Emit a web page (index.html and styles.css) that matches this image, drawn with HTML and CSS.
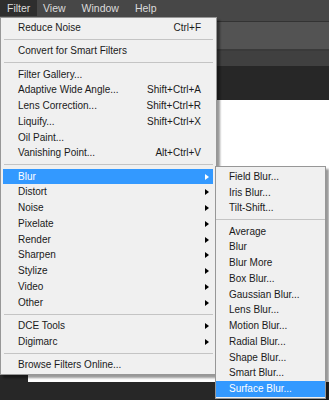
FILE: index.html
```html
<!DOCTYPE html>
<html lang="en">
<head>
  <meta charset="UTF-8" />
  <title>Filter menu</title>
  <link rel="stylesheet" href="styles.css">
</head>
<body>

<div class="menubar">
  <span class="menubar-item active">Filter</span>
  <span class="menubar-item">View</span>
  <span class="menubar-item">Window</span>
  <span class="menubar-item">Help</span>
</div>
<div class="optionsbar"></div>
<div class="tabsbar"></div>
<div class="workspace">
  <div class="toolpanel"></div>
  <div class="document"></div>
</div>

<div class="menu menu-main">
  <div class="item"><span>Reduce Noise</span><span class="key">Ctrl+F</span></div>
  <div class="sep"></div>
  <div class="item"><span>Convert for Smart Filters</span></div>
  <div class="sep"></div>
  <div class="item"><span>Filter Gallery...</span></div>
  <div class="item"><span>Adaptive Wide Angle...</span><span class="key">Shift+Ctrl+A</span></div>
  <div class="item"><span>Lens Correction...</span><span class="key">Shift+Ctrl+R</span></div>
  <div class="item"><span>Liquify...</span><span class="key">Shift+Ctrl+X</span></div>
  <div class="item"><span>Oil Paint...</span></div>
  <div class="item"><span>Vanishing Point...</span><span class="key">Alt+Ctrl+V</span></div>
  <div class="sep"></div>
  <div class="item sub selected"><span>Blur</span><i class="arrow"></i></div>
  <div class="item sub"><span>Distort</span><i class="arrow"></i></div>
  <div class="item sub"><span>Noise</span><i class="arrow"></i></div>
  <div class="item sub"><span>Pixelate</span><i class="arrow"></i></div>
  <div class="item sub"><span>Render</span><i class="arrow"></i></div>
  <div class="item sub"><span>Sharpen</span><i class="arrow"></i></div>
  <div class="item sub"><span>Stylize</span><i class="arrow"></i></div>
  <div class="item sub"><span>Video</span><i class="arrow"></i></div>
  <div class="item sub"><span>Other</span><i class="arrow"></i></div>
  <div class="sep"></div>
  <div class="item sub"><span>DCE Tools</span><i class="arrow"></i></div>
  <div class="item sub"><span>Digimarc</span><i class="arrow"></i></div>
  <div class="sep"></div>
  <div class="item"><span>Browse Filters Online...</span></div>
</div>

<div class="menu menu-sub">
  <div class="item"><span>Field Blur...</span></div>
  <div class="item"><span>Iris Blur...</span></div>
  <div class="item"><span>Tilt-Shift...</span></div>
  <div class="sep"></div>
  <div class="item"><span>Average</span></div>
  <div class="item"><span>Blur</span></div>
  <div class="item"><span>Blur More</span></div>
  <div class="item"><span>Box Blur...</span></div>
  <div class="item"><span>Gaussian Blur...</span></div>
  <div class="item"><span>Lens Blur...</span></div>
  <div class="item"><span>Motion Blur...</span></div>
  <div class="item"><span>Radial Blur...</span></div>
  <div class="item"><span>Shape Blur...</span></div>
  <div class="item"><span>Smart Blur...</span></div>
  <div class="item selected"><span>Surface Blur...</span></div>
</div>

</body>
</html>
```

FILE: styles.css
```css
body {
  margin: 0;
  background-color: #272727;
  font-family: 'Liberation Sans', Arial, sans-serif;
  font-size: 10px;
  color: #1a1a1a;
  height: 400px;
  overflow: hidden;
  position: relative;
}

/* app chrome behind the menu */
.menubar {
  height: 21px;
  background-color: #474747;
  border-bottom: 1px solid #333;
  display: flex;
  align-items: flex-start;
}

.menubar-item {
  color: #dcdcdc;
  height: 16px;
  line-height: 16px;
  font-size: 10.5px;
  padding: 0 10px 0 6px;
}

.menubar-item.active {
  background-color: #2e2e2e;
  box-sizing: border-box;
  width: 37px;
  padding: 0 0 0 7px;
}

.optionsbar {
  height: 27px;
  background-color: #535353;
  border-bottom: 2px solid #3a3a3a;
}

.tabsbar {
  height: 15px;
  background-color: #404040;
}

.workspace {
  display: flex;
  padding-top: 34px;
  height: 282px;
}

.toolpanel {
  width: 28px;
  flex-shrink: 0;
}

.document {
  flex: 1;
  background-color: #fff;
}

/* dropdown menus */
.menu {
  position: absolute;
  background-color: #f0f0f0;
  border: 1px solid #979797;
  box-shadow: 3px 3px 2px rgba(0, 0, 0, 0.4);
}

.menu-main {
  left: 0;
  top: 17px;
  width: 215px;
  padding: 2.1px 0 1px;
}

.menu-sub {
  left: 215px;
  top: 166px;
  width: 109px;
  padding: 1.8px 0 1.3px;
}

.item {
  height: 15.75px;
  line-height: 15.75px;
  display: flex;
  justify-content: space-between;
  align-items: center;
  position: relative;
  white-space: nowrap;
}

.menu-main .item {
  margin: 0 3px 0 2px;
  padding: 0 12px 0 15px;
}

.menu-sub .item {
  padding: 0 4px 0 13px;
}

.item.selected {
  background-color: #3399ff;
  color: #fff;
}

.key {
  color: #1a1a1a;
}

.arrow {
  width: 0;
  height: 0;
  border-top: 3.5px solid transparent;
  border-bottom: 3.5px solid transparent;
  border-left: 4px solid #000;
  margin-right: -8px;
}

.selected .arrow {
  border-left-color: #fff;
}

.sep {
  height: 7.55px;
  display: flex;
  align-items: center;
  padding: 0 3px;
}

.sep::before {
  content: "";
  flex: 1;
  height: 1px;
  background-color: #c4c4c4;
}

.menu-sub .sep {
  padding: 0;
}
```
